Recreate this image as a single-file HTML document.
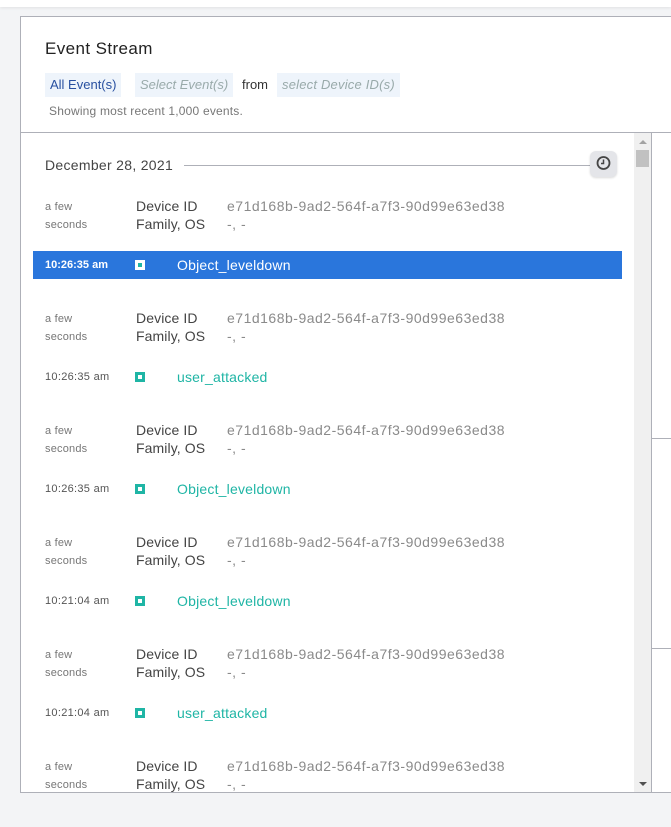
<!DOCTYPE html>
<html><head><meta charset="utf-8"><style>
*{margin:0;padding:0;box-sizing:border-box}
body{width:671px;height:827px;background:#f3f4f6;font-family:"Liberation Sans",sans-serif;position:relative;overflow:hidden}
.a{position:absolute;white-space:nowrap}
.top{left:0;top:0;width:671px;height:7px;background:#fff;box-shadow:0 1px 3px rgba(0,0,0,.08)}
.card{left:20px;top:16px;width:660px;height:777px;background:#fff;border:1px solid #aeb0b8}
.tag{top:73px;height:24px;line-height:24px;font-size:13px;background:#eef4fb;padding:0 5px}
.ml{font-size:11px;color:#777;letter-spacing:.2px}
.dl{font-size:14px;color:#444;letter-spacing:.1px}
.dv{font-size:14px;color:#8a8a8a;letter-spacing:.5px}
.tm{font-size:11px;color:#555;letter-spacing:.3px}
.ic{width:10px;height:10px;background:#1fb5a5;border:none}
.ic::after{content:"";position:absolute;left:3px;top:3px;width:4px;height:4px;background:#fff}
.ev{font-size:14px;color:#1fb5a5;letter-spacing:.2px}
</style></head><body>
<div class="a top"></div>
<div class="a card"></div>
<div class="a" style="left:45px;top:39px;font-size:17px;color:#222;letter-spacing:.4px">Event Stream</div>
<div class="a tag" style="left:45px;color:#2850a0">All Event(s)</div>
<div class="a tag" style="left:135px;color:#9aa;font-style:italic">Select Event(s)</div>
<div class="a" style="left:242px;top:73px;line-height:24px;font-size:13px;color:#333">from</div>
<div class="a tag" style="left:277px;color:#9aa;font-style:italic;letter-spacing:.2px">select Device ID(s)</div>
<div class="a" style="left:49px;top:104px;font-size:12px;color:#777;letter-spacing:.2px">Showing most recent 1,000 events.</div>
<div class="a" style="left:21px;top:132px;width:650px;height:1px;background:#aeb0b8"></div>
<div class="a" style="left:634px;top:133px;width:17px;height:659px;background:#f0f0f0"></div>
<div class="a" style="left:636px;top:150px;width:13px;height:17px;background:#c1c1c1"></div>
<div class="a" style="left:639px;top:140px;width:0;height:0;border-left:4px solid transparent;border-right:4px solid transparent;border-bottom:4px solid #a3a3a3"></div>
<div class="a" style="left:639px;top:782px;width:0;height:0;border-left:4px solid transparent;border-right:4px solid transparent;border-top:4px solid #505050"></div>
<div class="a" style="left:651px;top:133px;width:1px;height:659px;background:#aeb0b8"></div>
<div class="a" style="left:652px;top:438px;width:19px;height:1px;background:#aeb0b8"></div>
<div class="a" style="left:652px;top:648px;width:19px;height:1px;background:#aeb0b8"></div>
<div class="a" style="left:45px;top:157px;font-size:14px;color:#444;letter-spacing:.3px">December 28, 2021</div>
<div class="a" style="left:184px;top:165px;width:408px;height:1px;background:#aeb0b8"></div>
<div class="a" style="left:590px;top:151px;width:27px;height:26px;border-radius:6px;background:#e4e5e9;box-shadow:0 1px 2px rgba(0,0,0,.15)">
<svg width="27" height="26" viewBox="0 0 27 26"><circle cx="13.5" cy="12" r="6" fill="none" stroke="#444" stroke-width="1.8"/><path d="M13.5 8.5V12.5H11" fill="none" stroke="#444" stroke-width="1.5"/></svg></div>
<div class="a" style="left:33px;top:251px;width:589px;height:28px;background:#2a76dc"></div>
<div id="rows"></div>
<script>
var ev=["Object_leveldown","user_attacked","Object_leveldown","Object_leveldown","user_attacked"];
var tm=["10:26:35 am","10:26:35 am","10:26:35 am","10:21:04 am","10:21:04 am"];
var h="";
for(var k=0;k<6;k++){var y=206+112*k;
h+='<div class="a ml" style="left:45px;top:'+(y-5)+'px">a few</div><div class="a ml" style="left:45px;top:'+(y+13)+'px">seconds</div>';
h+='<div class="a dl" style="left:136px;top:'+(y-8)+'px">Device ID</div><div class="a dl" style="left:136px;top:'+(y+10)+'px">Family, OS</div>';
h+='<div class="a dv" style="left:227px;top:'+(y-8)+'px">e71d168b-9ad2-564f-a7f3-90d99e63ed38</div><div class="a dv" style="left:227px;top:'+(y+10)+'px">-, -</div>';
if(k<5){var e=265+112*k,s=k==0;
h+='<div class="a tm" style="left:45px;top:'+(e-6)+'px;'+(s?'color:#fff;font-weight:bold;letter-spacing:0':'')+'">'+tm[k]+'</div>';
h+='<div class="a ic" style="left:135px;top:'+(e-5)+'px;'+(s?'background:#fff':'')+'"></div>';
if(s)h+='<div class="a" style="left:138px;top:'+(e-2)+'px;width:4px;height:4px;background:#1fb5a5"></div>';
h+='<div class="a ev" style="left:177px;top:'+(e-8)+'px;'+(s?'color:#fff':'')+'">'+ev[k]+'</div>';}}
document.getElementById("rows").innerHTML=h;
</script>
</body></html>
